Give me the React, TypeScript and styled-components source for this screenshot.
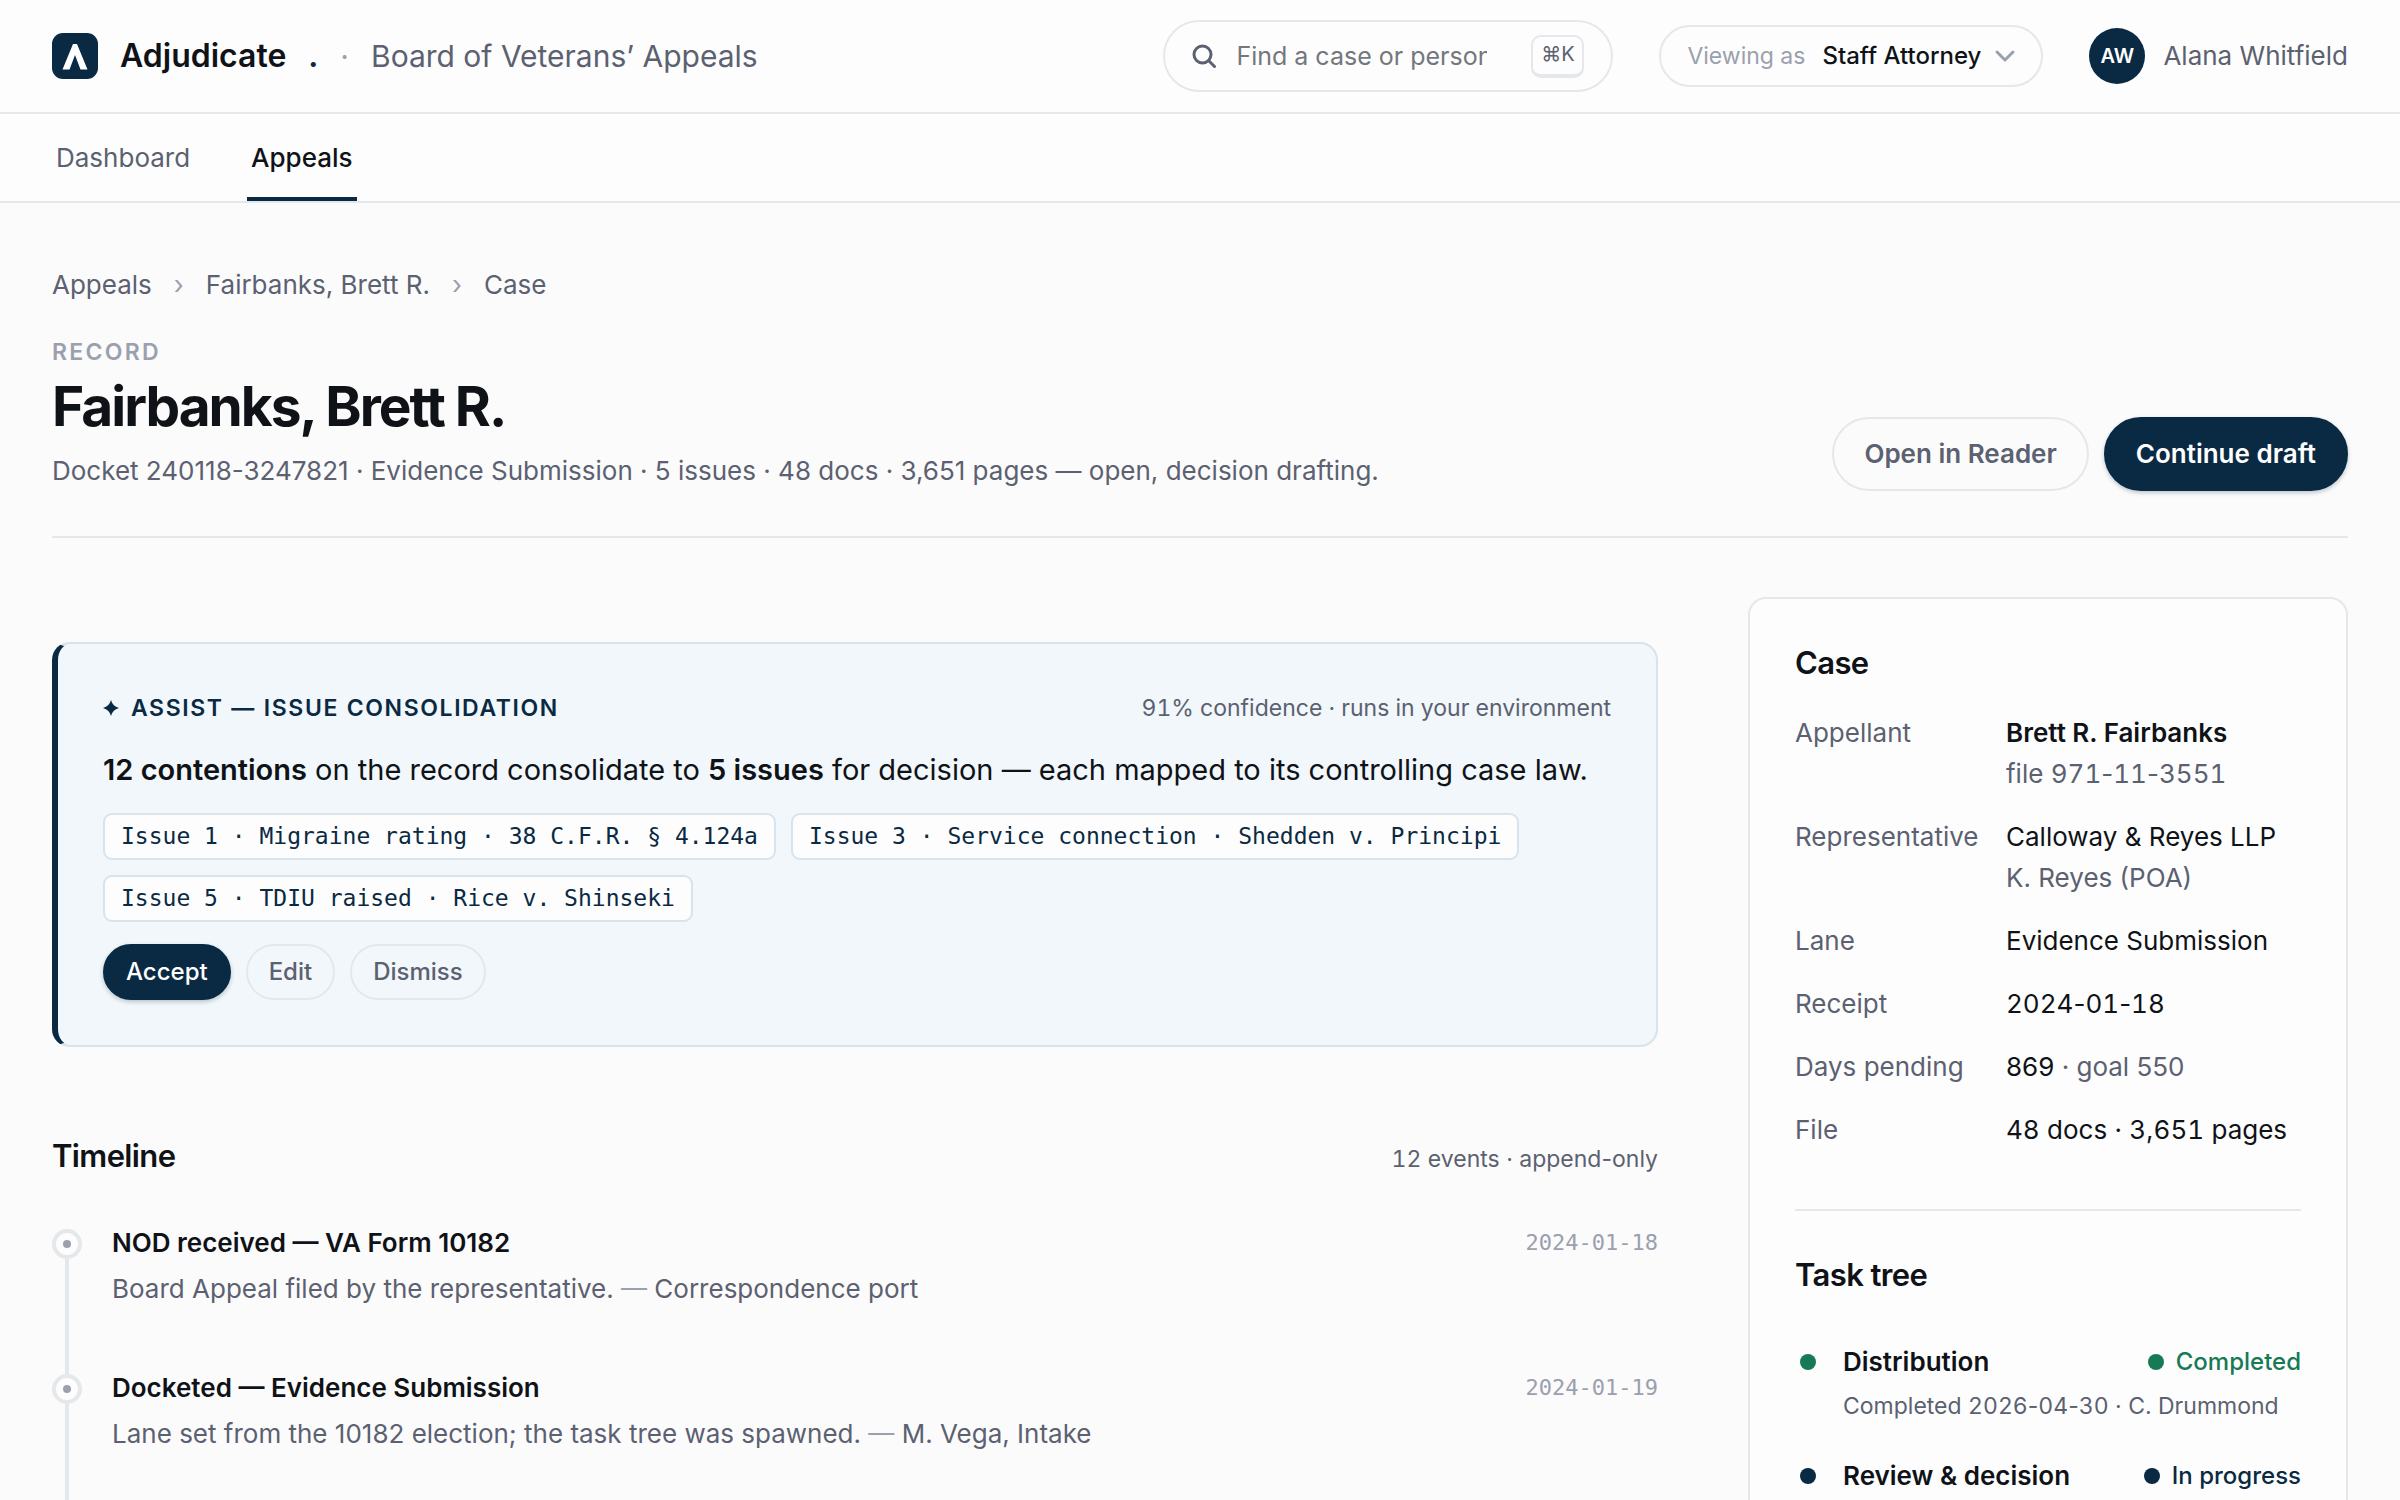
import React from 'react';
import styled, { createGlobalStyle, css } from 'styled-components';

const color = {
  navy: '#0a2a43',
  ink: '#0f1317',
  muted: '#5b6170',
  faint: '#9aa0ad',
  line: '#e5e8ea',
  page: '#fbfbfc',
  surface: '#fdfdfe',
  tint: '#f1f7fb',
  tintLine: '#d7e4ed',
  green: '#187a54',
};

const mono = `'DejaVu Sans Mono', 'Liberation Mono', monospace`;

const GlobalStyle = createGlobalStyle`
  *, *::before, *::after { box-sizing: border-box; }
  html, body, #root { height: 100%; }
  body {
    margin: 0;
    overflow: hidden;
    background: ${color.page};
    color: ${color.ink};
    font-family: Inter, 'Liberation Sans', sans-serif;
    font-size: 26px;
    line-height: 40px;
    -webkit-font-smoothing: antialiased;
  }
  h1, h2, h3, p, dl, dd, dt, ol, ul { margin: 0; padding: 0; }
  ol, ul { list-style: none; }
  a { color: inherit; text-decoration: none; }
  button, input, select { font: inherit; color: inherit; }
`;

const Page = styled.div`
  display: flex;
  flex-direction: column;
  height: 100%;
  overflow: hidden;
`;

const Header = styled.header`
  display: flex;
  flex: none;
  align-items: center;
  gap: 46px;
  height: 114px;
  padding: 0 52px;
  background: ${color.surface};
  border-bottom: 2px solid ${color.line};
`;

const Brand = styled.a`
  display: flex;
  align-items: center;
  gap: 22px;
  margin-right: auto;
  font-size: 30px;
  white-space: nowrap;
`;

const BrandName = styled.strong`
  font-size: 32px;
  font-weight: 600;
`;

const BrandStop = styled.span`
  color: ${color.navy};
  font-weight: 700;
`;

const BrandDivider = styled.span`
  color: ${color.faint};
`;

const BrandOrg = styled.span`
  color: ${color.muted};
`;

const Search = styled.label`
  display: flex;
  align-items: center;
  gap: 20px;
  width: 450px;
  height: 72px;
  padding: 0 27px;
  background: ${color.surface};
  border: 2px solid ${color.line};
  border-radius: 36px;
`;

const SearchInput = styled.input`
  flex: 1;
  min-width: 0;
  margin-right: 24px;
  padding: 0;
  border: 0;
  outline: 0;
  background: transparent;
  font-size: 25px;

  &::placeholder { color: #74777c; opacity: 1; }
`;

const Key = styled.kbd`
  display: flex;
  align-items: center;
  justify-content: center;
  width: 53px;
  height: 43px;
  padding-bottom: 2px;
  border: 2px solid ${color.line};
  border-bottom-width: 4px;
  border-radius: 10px;
  color: ${color.muted};
  font-family: Inter, 'DejaVu Sans', sans-serif;
  font-size: 20px;
  line-height: 24px;
`;

const RolePicker = styled.label`
  position: relative;
  display: flex;
  align-items: center;
  gap: 17px;
  height: 62px;
  padding: 0 26px;
  background: ${color.surface};
  border: 2px solid ${color.line};
  border-radius: 31px;
  color: ${color.faint};
  font-size: 23px;
  white-space: nowrap;
`;

const RoleSelect = styled.select`
  padding: 0 34px 0 0;
  border: 0;
  outline: 0;
  appearance: none;
  background: transparent;
  color: ${color.ink};
  font-size: 24px;
  font-weight: 500;
`;

const RoleChevron = styled.svg`
  position: absolute;
  right: 25px;
  pointer-events: none;
`;

const User = styled.div`
  display: flex;
  align-items: center;
  gap: 18px;
  color: ${color.muted};
  white-space: nowrap;
`;

const Avatar = styled.span`
  display: grid;
  place-items: center;
  width: 56px;
  height: 56px;
  border-radius: 50%;
  background: ${color.navy};
  color: #fff;
  font-size: 20px;
  font-weight: 600;
`;

const Tabs = styled.nav`
  display: flex;
  flex: none;
  gap: 53px;
  height: 89px;
  padding: 0 52px;
  background: ${color.surface};
  border-bottom: 2px solid ${color.line};
`;

const Tab = styled.a<{ $active?: boolean }>`
  display: flex;
  align-items: center;
  padding: 5px 4px 0;
  border-bottom: 4px solid ${p => (p.$active ? color.navy : 'transparent')};
  color: ${p => (p.$active ? color.ink : color.muted)};
  font-weight: ${p => (p.$active ? 500 : 400)};
`;

const Main = styled.main`
  display: flex;
  flex: 1;
  flex-direction: column;
  min-height: 0;
  padding: 62px 52px 0;
`;

const Crumbs = styled.nav`
  display: flex;
  gap: 22px;
  color: ${color.muted};
`;

const CrumbMark = styled.span`
  color: ${color.faint};
`;

const RecordHead = styled.div`
  display: flex;
  align-items: flex-end;
  justify-content: space-between;
  padding: 30px 0 45px;
  border-bottom: 2px solid ${color.line};
`;

const Eyebrow = styled.p`
  color: ${color.faint};
  font-size: 23px;
  font-weight: 600;
  letter-spacing: 0.1em;
  line-height: 34px;
`;

const Title = styled.h1`
  padding: 3px 0 4px;
  font-size: 55px;
  font-weight: 700;
  letter-spacing: -2px;
  line-height: 68px;
`;

const Summary = styled.p`
  margin-top: 7px;
  color: ${color.muted};
`;

const Actions = styled.div<{ $top?: number }>`
  display: flex;
  gap: 15px;
  margin-top: ${p => p.$top ?? 0}px;
`;

const Button = styled.button<{ $primary?: boolean; $small?: boolean }>`
  height: ${p => (p.$small ? 56 : 74)}px;
  padding: 0 ${p => (p.$small ? 21 : 30)}px;
  border: 2px solid ${p => (p.$primary ? color.navy : color.line)};
  border-radius: 37px;
  background: ${p => (p.$primary ? color.navy : 'transparent')};
  color: ${p => (p.$primary ? '#fff' : color.muted)};
  font-size: ${p => (p.$small ? 24 : 26)}px;
  font-weight: ${p => (p.$small ? 500 : 600)};
  line-height: 34px;
  white-space: nowrap;
  ${p => p.$primary && css`box-shadow: 0 2px 4px rgba(10, 42, 67, 0.25);`}
`;

const Columns = styled.div`
  display: grid;
  flex: 1;
  grid-template-columns: minmax(0, 1fr) 600px;
  gap: 90px;
  min-height: 0;
  padding-top: 59px;
`;

const Record = styled.div`
  display: flex;
  flex-direction: column;
  padding-top: 45px;
`;

const Assist = styled.section`
  padding: 44px 45px 45px;
  background: ${color.tint};
  border: 2px solid ${color.tintLine};
  border-left: 6px solid ${color.navy};
  border-radius: 18px;
`;

const AssistHead = styled.div`
  display: flex;
  align-items: center;
  justify-content: space-between;
  color: ${color.muted};
  font-size: 23px;
  font-variant-numeric: tabular-nums;
`;

const AssistLabel = styled.h2`
  display: flex;
  align-items: center;
  gap: 12px;
  color: ${color.navy};
  font-size: 23px;
  font-weight: 600;
  letter-spacing: 0.07em;
`;

const Finding = styled.p`
  margin-top: 18px;
  font-size: 29px;
  line-height: 48px;

  strong { font-weight: 600; }
`;

const Chips = styled.ul`
  display: flex;
  flex-wrap: wrap;
  gap: 15px;
  margin-top: 19px;
`;

const Chip = styled.li`
  padding: 4px 16px;
  background: ${color.surface};
  border: 2px solid ${color.tintLine};
  border-radius: 9px;
  color: ${color.navy};
  font-family: ${mono};
  font-size: 23px;
  line-height: 35px;
  white-space: nowrap;
`;

const SectionHead = styled.div`
  display: flex;
  align-items: baseline;
  justify-content: space-between;
  margin-top: 89px;
  color: ${color.muted};
  font-size: 23px;
`;

const SectionTitle = styled.h2`
  color: ${color.ink};
  font-size: 31px;
  font-weight: 600;
  letter-spacing: -0.02em;
  line-height: 40px;
`;

const Events = styled.ol`
  display: flex;
  flex: 1;
  flex-direction: column;
  margin-top: 42px;
`;

const Event = styled.li`
  display: flex;
  gap: 30px;

  &:last-child { flex: 1; }
`;

const Rail = styled.span`
  display: flex;
  flex: none;
  flex-direction: column;
  align-items: center;
  width: 30px;
  padding-top: 8px;

  &::after {
    content: '';
    flex: 1;
    width: 4px;
    margin-bottom: -8px;
    background: ${color.line};
  }
`;

const Node = styled.span`
  display: grid;
  place-items: center;
  width: 30px;
  height: 30px;
  border: 4px solid ${color.line};
  border-radius: 50%;
  background: ${color.surface};

  &::after {
    content: '';
    width: 8px;
    height: 8px;
    border-radius: 50%;
    background: ${color.faint};
  }
`;

const EventBody = styled.div`
  flex: 1;
  padding-bottom: 53px;
`;

const EventHead = styled.div`
  display: flex;
  align-items: center;
  justify-content: space-between;
  line-height: 44px;
`;

const ItemTitle = styled.h3`
  color: ${color.ink};
  font-size: 26px;
  font-weight: 600;
`;

const EventDate = styled.time`
  color: ${color.faint};
  font-family: ${mono};
  font-size: 22px;
`;

const EventText = styled.p`
  color: ${color.muted};
  line-height: 48px;
`;

const Dash = styled.span`
  color: ${color.faint};
`;

const Sidebar = styled.aside`
  padding: 44px 45px;
  background: ${color.surface};
  border: 2px solid ${color.line};
  border-bottom: 0;
  border-radius: 18px 18px 0 0;
`;

const Facts = styled.dl`
  display: grid;
  grid-template-columns: 182px 1fr;
  gap: 22px 29px;
  margin-top: 29px;
  padding-bottom: 59px;
  border-bottom: 2px solid ${color.line};
  line-height: 41px;
  white-space: nowrap;
`;

const FactName = styled.dt`
  color: ${color.muted};
`;

const Soft = styled.span<{ $block?: boolean }>`
  display: ${p => (p.$block ? 'block' : 'inline')};
  color: ${color.muted};
`;

const Strong = styled.strong`
  font-weight: 600;
`;

const Digits = styled.span`
  font-variant-numeric: tabular-nums;
`;

const TaskTitle = styled(SectionTitle)`
  margin-top: 44px;
`;

const Tasks = styled.ul`
  display: flex;
  flex-direction: column;
  gap: 28px;
  margin-top: 46px;
`;

const Task = styled.li`
  display: grid;
  grid-template-columns: 26px 1fr auto;
  align-items: center;
  column-gap: 22px;
  line-height: 41px;
`;

const Dot = styled.span<{ $tone: string }>`
  flex: none;
  justify-self: center;
  width: 16px;
  height: 16px;
  border-radius: 50%;
  background: ${p => p.$tone};
`;

const Status = styled.span<{ $tone: string }>`
  display: flex;
  align-items: center;
  gap: 12px;
  color: ${p => p.$tone};
  font-size: 24px;
  font-weight: 500;
`;

const TaskNote = styled.p`
  grid-column: 2 / -1;
  padding-top: 4px;
  color: ${color.muted};
  font-size: 23px;
  white-space: nowrap;
`;

const issues = [
  'Issue 1 · Migraine rating · 38 C.F.R. § 4.124a',
  'Issue 3 · Service connection · Shedden v. Principi',
  'Issue 5 · TDIU raised · Rice v. Shinseki',
];

const events = [
  { title: 'NOD received — VA Form 10182', date: '2024-01-18', text: 'Board Appeal filed by the representative.', by: 'Correspondence port' },
  { title: 'Docketed — Evidence Submission', date: '2024-01-19', text: 'Lane set from the 10182 election; the task tree was spawned.', by: 'M. Vega, Intake' },
];

const tasks = [
  { title: 'Distribution', status: 'Completed', tone: color.green, note: 'Completed 2026-04-30 · C. Drummond' },
  { title: 'Review & decision', status: 'In progress', tone: color.navy, note: '' },
];

// Digits are set in tabular figures; hyphens and letters keep their own widths.
function Figures({ children }: { children: string }) {
  return (
    <>
      {children.split(/(\d+)/).map((part, i) => (i % 2 ? <Digits key={i}>{part}</Digits> : part))}
    </>
  );
}

const facts: { name: string; value: React.ReactNode }[] = [
  { name: 'Appellant', value: <><Strong>Brett R. Fairbanks</Strong><Soft $block><Figures>file 971-11-3551</Figures></Soft></> },
  { name: 'Representative', value: <>Calloway &amp; Reyes LLP<Soft $block>K. Reyes (POA)</Soft></> },
  { name: 'Lane', value: 'Evidence Submission' },
  { name: 'Receipt', value: <Figures>2024-01-18</Figures> },
  { name: 'Days pending', value: <>869 <Soft>· goal 550</Soft></> },
  { name: 'File', value: <Figures>48 docs · 3,651 pages</Figures> },
];

function Logo() {
  return (
    <svg width="46" height="46" viewBox="0 0 46 46" aria-hidden="true">
      <rect width="46" height="46" rx="11" fill={color.navy} />
      <path d="M10.5 36.5 L21 11 H25 L35.5 36.5 H28.500 L23 22 L17.5 36.5 Z" fill="#fff" />
    </svg>
  );
}

export default function App() {
  return (
    <>
      <GlobalStyle />
      <Page>
        <Header>
          <Brand href="#">
            <Logo />
            <BrandName>Adjudicate</BrandName>
            <BrandStop>.</BrandStop>
            <BrandDivider>·</BrandDivider>
            <BrandOrg>Board of Veterans’ Appeals</BrandOrg>
          </Brand>
          <Search>
            <svg width="24" height="24" viewBox="0 0 24 24" fill="none" stroke={color.muted} strokeWidth="3" strokeLinecap="round" aria-hidden="true">
              <circle cx="10.5" cy="10.5" r="8.5" />
              <path d="M16.8 16.8 L22.5 22.5" />
            </svg>
            <SearchInput type="text" aria-label="Find a case or person" placeholder="Find a case or person" />
            <Key>⌘K</Key>
          </Search>
          <RolePicker>
            Viewing as
            <RoleSelect defaultValue="Staff Attorney">
              <option>Staff Attorney</option>
            </RoleSelect>
            <RoleChevron width="22" height="14" viewBox="0 0 22 14" fill="none" stroke={color.faint} strokeWidth="3" strokeLinecap="round" strokeLinejoin="round" aria-hidden="true">
              <path d="M3 3 L11 11 L19 3" />
            </RoleChevron>
          </RolePicker>
          <User>
            <Avatar>AW</Avatar>
            Alana Whitfield
          </User>
        </Header>
        <Tabs>
          <Tab href="#">Dashboard</Tab>
          <Tab href="#" $active>Appeals</Tab>
        </Tabs>
        <Main>
          <Crumbs>
            <a href="#">Appeals</a>
            <CrumbMark>›</CrumbMark>
            <a href="#">Fairbanks, Brett R.</a>
            <CrumbMark>›</CrumbMark>
            <span>Case</span>
          </Crumbs>
          <RecordHead>
            <div>
              <Eyebrow>RECORD</Eyebrow>
              <Title>Fairbanks, Brett R.</Title>
              <Summary>Docket 240118-3247821 · Evidence Submission · 5 issues · 48 docs · 3,651 pages — open, decision drafting.</Summary>
            </div>
            <Actions>
              <Button type="button">Open in Reader</Button>
              <Button type="button" $primary>Continue draft</Button>
            </Actions>
          </RecordHead>
          <Columns>
            <Record>
              <Assist>
                <AssistHead>
                  <AssistLabel>
                    <svg width="16" height="16" viewBox="0 0 16 16" fill={color.navy} aria-hidden="true">
                      <path d="M8 0 C9 4 11.5 6.5 16 8 C11.5 9.5 9 12 8 16 C7 12 4.500 9.500 0 8 C4.500 6.500 7 4 8 0 Z" />
                    </svg>
                    ASSIST — ISSUE CONSOLIDATION
                  </AssistLabel>
                  <span>91% confidence · runs in your environment</span>
                </AssistHead>
                <Finding>
                  <strong>12 contentions</strong> on the record consolidate to <strong>5 issues</strong> for decision — each mapped to its controlling case law.
                </Finding>
                <Chips>
                  {issues.map(issue => <Chip key={issue}>{issue}</Chip>)}
                </Chips>
                <Actions $top={22}>
                  <Button type="button" $small $primary>Accept</Button>
                  <Button type="button" $small>Edit</Button>
                  <Button type="button" $small>Dismiss</Button>
                </Actions>
              </Assist>
              <SectionHead>
                <SectionTitle>Timeline</SectionTitle>
                <span><Figures>12 events · append-only</Figures></span>
              </SectionHead>
              <Events>
                {events.map(event => (
                  <Event key={event.title}>
                    <Rail><Node /></Rail>
                    <EventBody>
                      <EventHead>
                        <ItemTitle>{event.title}</ItemTitle>
                        <EventDate>{event.date}</EventDate>
                      </EventHead>
                      <EventText>{event.text} <Dash>—</Dash> {event.by}</EventText>
                    </EventBody>
                  </Event>
                ))}
              </Events>
            </Record>
            <Sidebar>
              <SectionTitle>Case</SectionTitle>
              <Facts>
                {facts.map(fact => (
                  <React.Fragment key={fact.name}>
                    <FactName>{fact.name}</FactName>
                    <dd>{fact.value}</dd>
                  </React.Fragment>
                ))}
              </Facts>
              <TaskTitle>Task tree</TaskTitle>
              <Tasks>
                {tasks.map(task => (
                  <Task key={task.title}>
                    <Dot $tone={task.tone} />
                    <ItemTitle>{task.title}</ItemTitle>
                    <Status $tone={task.tone}><Dot $tone={task.tone} />{task.status}</Status>
                    {task.note && <TaskNote><Figures>{task.note}</Figures></TaskNote>}
                  </Task>
                ))}
              </Tasks>
            </Sidebar>
          </Columns>
        </Main>
      </Page>
    </>
  );
}
